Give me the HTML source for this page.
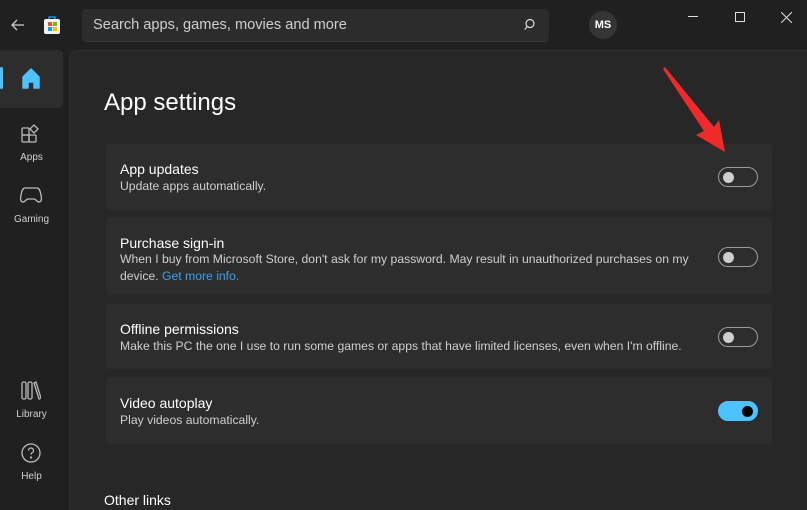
<!DOCTYPE html>
<html><head><meta charset="utf-8"><style>
*{margin:0;padding:0;box-sizing:border-box}
html,body{width:807px;height:499px;overflow:hidden;background:#202020;font-family:"Liberation Sans",sans-serif;color:#fff}
.abs{position:absolute}
.search{left:82px;top:9px;width:467px;height:33px;background:#2c2c2c;border-radius:5px;border-bottom:1px solid #3a3a3a}
.search span{position:absolute;left:11px;top:8px;font-size:14.6px;color:#cfcfcf}
.main{left:69px;top:50px;width:750px;height:460px;background:#272727;border-radius:8px 0 0 0;border-top:1px solid #2e2e2e;border-left:1px solid #2e2e2e}
.card{position:absolute;left:105px;width:668px;background:#2d2d2d;border-radius:5px;border:1px solid #292929}
.t{position:absolute;left:14px;font-size:14px;color:#fff}
.d{position:absolute;left:14px;font-size:12.2px;color:#cfcfcf;line-height:17px;white-space:nowrap}
.tog{position:absolute;left:612px;width:40px;height:20px;border:1px solid #9a9a9a;border-radius:10px}
.tog::after{content:"";position:absolute;left:4px;top:4px;width:11px;height:11px;border-radius:50%;background:#cfcfcf}
.on{background:#4cc2ff;border-color:#4cc2ff}
.on::after{left:23px;top:4px;width:11px;height:11px;background:#000}
.nav{position:absolute;left:0;width:63px;text-align:center;font-size:10px;color:#d0d0d0}
</style></head><body>
<svg class="abs" style="left:10px;top:17px" width="16" height="16" viewBox="0 0 16 16"><path d="M14 8H2M7 3L2 8l5 5" stroke="#ccc" stroke-width="1.3" fill="none"/></svg>
<svg class="abs" style="left:43px;top:15px" width="20" height="20" viewBox="0 0 20 20"><path d="M6 4V2h6v2" stroke="#1aa3ff" stroke-width="1.3" fill="none"/><rect x="1" y="4" width="16" height="15" rx="2" fill="#f2f2f2"/><rect x="5" y="7" width="4" height="4" fill="#f25022"/><rect x="10" y="7" width="4" height="4" fill="#7fba00"/><rect x="5" y="12" width="4" height="4" fill="#00a4ef"/><rect x="10" y="12" width="4" height="4" fill="#ffb900"/></svg>
<div class="abs search"><span>Search apps, games, movies and more</span>
<svg class="abs" style="left:442px;top:9px" width="14" height="14" viewBox="0 0 14 14"><circle cx="6" cy="5.5" r="4" stroke="#ddd" stroke-width="1.2" fill="none"/><path d="M3.2 8.5L0.8 11.5" stroke="#ddd" stroke-width="1.2"/></svg></div>
<div class="abs" style="left:589px;top:11px;width:28px;height:28px;border-radius:50%;background:#353535;font-size:11px;font-weight:bold;text-align:center;line-height:28px">MS</div>
<div class="abs" style="left:688px;top:16px;width:10px;height:1px;background:#ddd"></div>
<div class="abs" style="left:735px;top:12px;width:10px;height:10px;border:1px solid #ddd"></div>
<svg class="abs" style="left:781px;top:12px" width="11" height="11"><path d="M0 0L11 11M11 0L0 11" stroke="#ddd" stroke-width="1"/></svg>
<div class="abs" style="left:0;top:50px;width:63px;height:58px;background:#2d2d2d;border-radius:0 5px 5px 0"></div>
<div class="abs" style="left:0;top:67px;width:3px;height:22px;background:#4cc2ff;border-radius:2px"></div>
<svg class="abs" style="left:21px;top:68px" width="20" height="21" viewBox="0 0 20 21"><path d="M2 9L10 1l8 8v11h-5v-6H7v6H2z" fill="#4cc2ff" stroke="#4cc2ff" stroke-linejoin="round" stroke-width="1.5"/></svg>
<svg class="abs" style="left:21px;top:124px" width="20" height="20" viewBox="0 0 20 20" fill="none" stroke="#bbb" stroke-width="1.3"><rect x="1" y="4" width="7" height="7" rx="1"/><rect x="1" y="11" width="7" height="7" rx="1"/><rect x="8" y="11" width="7" height="7" rx="1"/><path d="M13 1l4 4-4 4-4-4z"/></svg>
<div class="nav" style="top:152px">Apps</div>
<svg class="abs" style="left:20px;top:187px" width="22" height="16" viewBox="0 0 22 16" fill="none" stroke="#bbb" stroke-width="1.3"><path d="M5 1h12c2 0 3 2 4 7s0 7-2 7-3-3-5-3H8c-2 0-3 3-5 3S0 13 1 8 3 1 5 1z"/></svg>
<div class="nav" style="top:214px">Gaming</div>
<svg class="abs" style="left:21px;top:381px" width="20" height="19" viewBox="0 0 20 19" fill="none" stroke="#bbb" stroke-width="1.3"><rect x="1" y="1" width="4" height="17" rx="1.5"/><rect x="7" y="1" width="4" height="17" rx="1.5"/><path d="M13 2l2-1 5 16-2 1z"/></svg>
<div class="nav" style="top:409px">Library</div>
<svg class="abs" style="left:21px;top:443px" width="20" height="20" viewBox="0 0 20 20" fill="none" stroke="#bbb" stroke-width="1.3"><circle cx="10" cy="10" r="9"/><path d="M7.5 7.5a2.5 2.5 0 1 1 3.5 2.3c-.8.4-1 1-1 1.8"/><circle cx="10" cy="14.5" r=".5" fill="#bbb"/></svg>
<div class="nav" style="top:471px">Help</div>
<div class="abs main"></div>
<div class="abs" style="left:104px;top:89px;font-size:24px">App settings</div>
<div class="card" style="top:143px;height:68px"><div class="t" style="top:17px">App updates</div><div class="d" style="top:34px">Update apps automatically.</div><div class="tog" style="top:23px"></div></div>
<div class="card" style="top:217px;height:79px"><div class="t" style="top:17px">Purchase sign-in</div><div class="d" style="top:33px">When I buy from Microsoft Store, don't ask for my password. May result in unauthorized purchases on my<br>device. <span style="color:#3aa0f3">Get more info.</span></div><div class="tog" style="top:29px"></div></div>
<div class="card" style="top:303px;height:67px"><div class="t" style="top:17px">Offline permissions</div><div class="d" style="top:34px">Make this PC the one I use to run some games or apps that have limited licenses, even when I'm offline.</div><div class="tog" style="top:23px"></div></div>
<div class="card" style="top:377px;height:68px"><div class="t" style="top:17px">Video autoplay</div><div class="d" style="top:34px">Play videos automatically.</div><div class="tog on" style="top:23px"></div></div>
<div class="abs" style="left:104px;top:492px;font-size:14px">Other links</div>
<svg class="abs" style="left:0;top:0" width="807" height="499"><path d="M665 67L714 127 719 120 725 152 696 135 704 131 663 69z" fill="#f02a2a"/></svg>
</body></html>
